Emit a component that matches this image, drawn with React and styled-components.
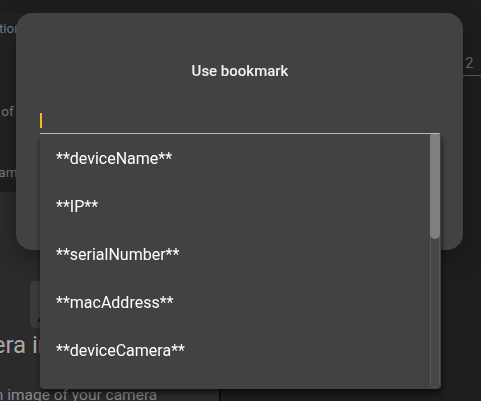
import React from "react";
import styled, { createGlobalStyle } from "styled-components";

const bookmarks = [
  "deviceName",
  "IP",
  "serialNumber",
  "macAddress",
  "deviceCamera",
  "deviceModel",
  "firmware",
  "location",
  "group",
  "timezone",
  "date",
  "time",
  "uptime",
];

const App = () => {
  return (
    <>
      <GlobalStyle />
      <Page>
        <LeftPanel>
          <TopCard>
            <Hint shift="-48px">Notification</Hint>
            <Hint shift="-38px" gap="67px">Name of your device</Hint>
            <Hint shift="-16px" gap="45px">Example</Hint>
          </TopCard>
          <BottomCard>
            <IconButton>
              <svg width="10" height="10" viewBox="0 0 10 10">
                <path d="M1 9 L5 2 L9 9 Z" fill="#1a1a1a" />
              </svg>
            </IconButton>
            <Heading>Camera image</Heading>
            <SubText>Upload an image of your camera</SubText>
          </BottomCard>
        </LeftPanel>
        <Divider />
        <RightPanel>
          <PageTab>2</PageTab>
        </RightPanel>
      </Page>

      <Backdrop>
        <Dialog>
          <Title>Use bookmark</Title>
          <Field>
            <Caret />
            <Underline />
          </Field>
        </Dialog>
      </Backdrop>

      <Menu>
        <MenuList>
          {bookmarks.map((name) => (
            <MenuItem key={name}>**{name}**</MenuItem>
          ))}
        </MenuList>
        <ScrollTrack>
          <ScrollThumb />
        </ScrollTrack>
      </Menu>
    </>
  );
};

export default App;

const GlobalStyle = createGlobalStyle`
  html, body {
    margin: 0;
    padding: 0;
    background: #1e1e1e;
    font-family: Roboto, "Liberation Sans", sans-serif;
    overflow: hidden;
  }
  * {
    box-sizing: border-box;
  }
`;

const Page = styled.div`
  display: grid;
  grid-template-columns: 219px 2px 1fr;
  width: 481px;
  height: 401px;
  padding-top: 13px;
  background: #1e1e1e;
`;

const LeftPanel = styled.div`
  display: flex;
  flex-direction: column;
  gap: 12px;
  overflow: hidden;
`;

const TopCard = styled.div`
  display: flex;
  flex-direction: column;
  height: 175px;
  padding-top: 7px;
  background: #222222;
`;

const Hint = styled.div`
  margin-top: ${(p) => p.gap || "0"};
  margin-left: ${(p) => p.shift};
  font-size: 13.5px;
  line-height: 16px;
  color: #7c7c7c;
  white-space: nowrap;
`;

const BottomCard = styled.div`
  flex: 1;
  display: flex;
  flex-direction: column;
  background: #2b2b2b;
  padding-top: 89px;
`;

const IconButton = styled.div`
  display: flex;
  align-items: flex-end;
  width: 60px;
  height: 47px;
  margin-left: 30px;
  padding: 0 0 5px 6px;
  border-radius: 5px;
  background: #3b3b3b;
`;

const Heading = styled.div`
  margin: 3px 0 0 -57px;
  font-size: 24px;
  line-height: 28px;
  color: #a8a8a8;
  white-space: nowrap;
`;

const SubText = styled.div`
  margin: 27px 0 0 -66px;
  font-size: 15.5px;
  color: #8a8a8a;
  white-space: nowrap;
`;

const Divider = styled.div`
  background: #0c0c0c;
`;

const RightPanel = styled.div`
  display: flex;
  justify-content: flex-end;
  background: #1e1e1e;
`;

const PageTab = styled.div`
  width: 18px;
  height: 63px;
  padding: 41px 0 0 2px;
  font-size: 15px;
  color: #6e6e6e;
  border-bottom: 1px solid #5a5a5a;
`;

const Backdrop = styled.div`
  position: fixed;
  inset: 0;
  display: flex;
  align-items: flex-start;
  padding: 13px 0 0 16px;
`;

const Dialog = styled.div`
  width: 447px;
  height: 237px;
  padding: 48px 23px 0 24px;
  border-radius: 16px;
  background: #424242;
  box-shadow: 0 8px 24px rgba(0, 0, 0, 0.35);
`;

const Title = styled.div`
  text-align: center;
  font-size: 15px;
  font-weight: 500;
  line-height: 20px;
  color: #f2f2f2;
`;

const Field = styled.div`
  position: relative;
  height: 48px;
  margin-top: 5px;
  padding-top: 27px;
`;

const Caret = styled.div`
  width: 2px;
  height: 15px;
  background: #f3b82c;
`;

const Underline = styled.div`
  position: absolute;
  left: 0;
  right: 0;
  bottom: 0;
  height: 1px;
  background: #b9b9b9;

  &::after {
    content: "";
    position: absolute;
    left: 6px;
    right: 4px;
    top: 0;
    bottom: 0;
    background: #f0b93a;
  }
`;

const Menu = styled.div`
  position: fixed;
  left: 40px;
  top: 134px;
  width: 401px;
  height: 255px;
  overflow: hidden;
  background: #424242;
  box-shadow: 0 6px 6px rgba(0, 0, 0, 0.35), 2px 3px 4px rgba(0, 0, 0, 0.25);
  border-radius: 0 0 4px 4px;
`;

const MenuList = styled.div`
  display: flex;
  flex-direction: column;
`;

const MenuItem = styled.div`
  display: flex;
  align-items: center;
  flex: none;
  height: 48px;
  padding: 0 16px;
  font-size: 16px;
  color: #ffffff;
  white-space: nowrap;
`;

const ScrollTrack = styled.div`
  position: absolute;
  top: 0;
  right: 1px;
  bottom: 1px;
  width: 10px;
  background: #464646;
  border: 1px solid #575757;
  border-radius: 0 0 5px 5px;
`;

const ScrollThumb = styled.div`
  margin: -1px;
  height: 105px;
  background: #808080;
  border-radius: 2px 2px 5px 5px;
`;
